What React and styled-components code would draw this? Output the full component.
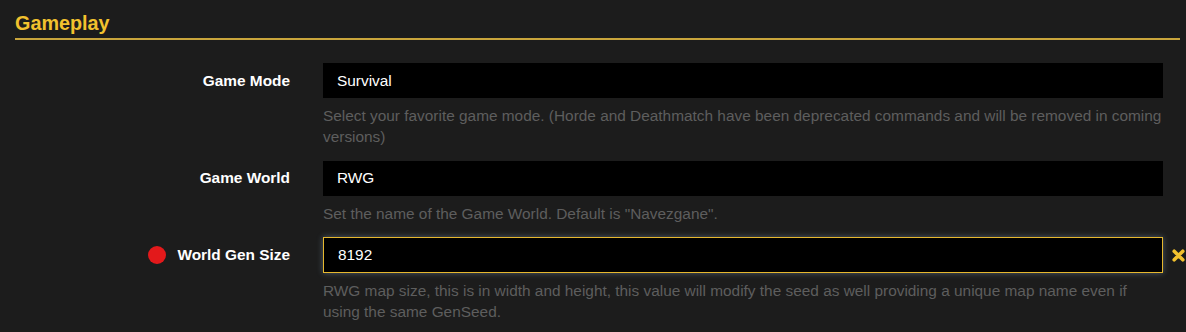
import React from "react";
import styled, { createGlobalStyle } from "styled-components";

const GlobalStyle = createGlobalStyle`
    body {
        margin: 0;
        background: #1c1c1c;
        font-family: "Liberation Sans", Arial, sans-serif;
    }
`;

const Section = styled.section`
    padding: 12px 6px 0 15px;
    height: 332px;
    box-sizing: border-box;
`;

const Title = styled.h2`
    margin: 0;
    font-size: 19.8px;
    line-height: 23px;
    font-weight: bold;
    color: #f2c12e;
    padding-bottom: 3px;
    border-bottom: 2px solid #c9a53c;
`;

const Rows = styled.div`
    padding-top: 23px;
    display: flex;
    flex-direction: column;
    gap: 13.5px;
`;

const Row = styled.div`
    display: grid;
    grid-template-columns: 275px 840px 1fr;
    column-gap: 33px;
    row-gap: 7px;
`;

const Label = styled.label`
    display: flex;
    align-items: center;
    justify-content: flex-end;
    gap: 11px;
    height: 35px;
    color: #fff;
    font-size: 15.4px;
    font-weight: bold;
`;

const Dot = styled.span`
    width: 18px;
    height: 18px;
    border-radius: 50%;
    background: #e3191b;
`;

const Input = styled.input`
    box-sizing: border-box;
    width: 100%;
    height: ${(p) => (p.$active ? "36px" : "35px")};
    padding: 0 14px;
    background: #000;
    color: #fff;
    font-family: inherit;
    font-size: 15.4px;
    border: ${(p) => (p.$active ? "1px solid #e6b82e" : "none")};
    box-shadow: ${(p) => (p.$active ? "0 0 6px rgba(140, 170, 200, 0.45)" : "none")};
    outline: none;
`;

const Clear = styled.span`
    display: flex;
    align-items: center;
    margin-left: -24px;
    height: 36px;
`;

const Help = styled.p`
    grid-column: 2;
    margin: 0;
    font-size: 15.4px;
    line-height: 21px;
    color: #5e5e5e;
`;

const XIcon = () => (
    <svg width="13" height="13" viewBox="0 0 13 13">
        <path d="M2.2 2.2 L10.8 10.8 M10.8 2.2 L2.2 10.8" stroke="#f2c12e" strokeWidth="3.6" strokeLinecap="round" />
    </svg>
);

const Field = ({ label, value, help, modified }) => (
    <Row>
        <Label>
            {modified && <Dot />}
            {label}
        </Label>
        <Input defaultValue={value} $active={modified} readOnly />
        {modified ? (
            <Clear>
                <XIcon />
            </Clear>
        ) : (
            <span />
        )}
        <Help>{help}</Help>
    </Row>
);

const App = () => {
    return (
        <>
            <GlobalStyle />
            <Section>
                <Title>Gameplay</Title>
                <Rows>
                    <Field
                        label="Game Mode"
                        value="Survival"
                        help="Select your favorite game mode. (Horde and Deathmatch have been deprecated commands and will be removed in coming versions)"
                    />
                    <Field
                        label="Game World"
                        value="RWG"
                        help='Set the name of the Game World. Default is "Navezgane".'
                    />
                    <Field
                        label="World Gen Size"
                        value="8192"
                        modified
                        help="RWG map size, this is in width and height, this value will modify the seed as well providing a unique map name even if using the same GenSeed."
                    />
                </Rows>
            </Section>
        </>
    );
};

export default App;
